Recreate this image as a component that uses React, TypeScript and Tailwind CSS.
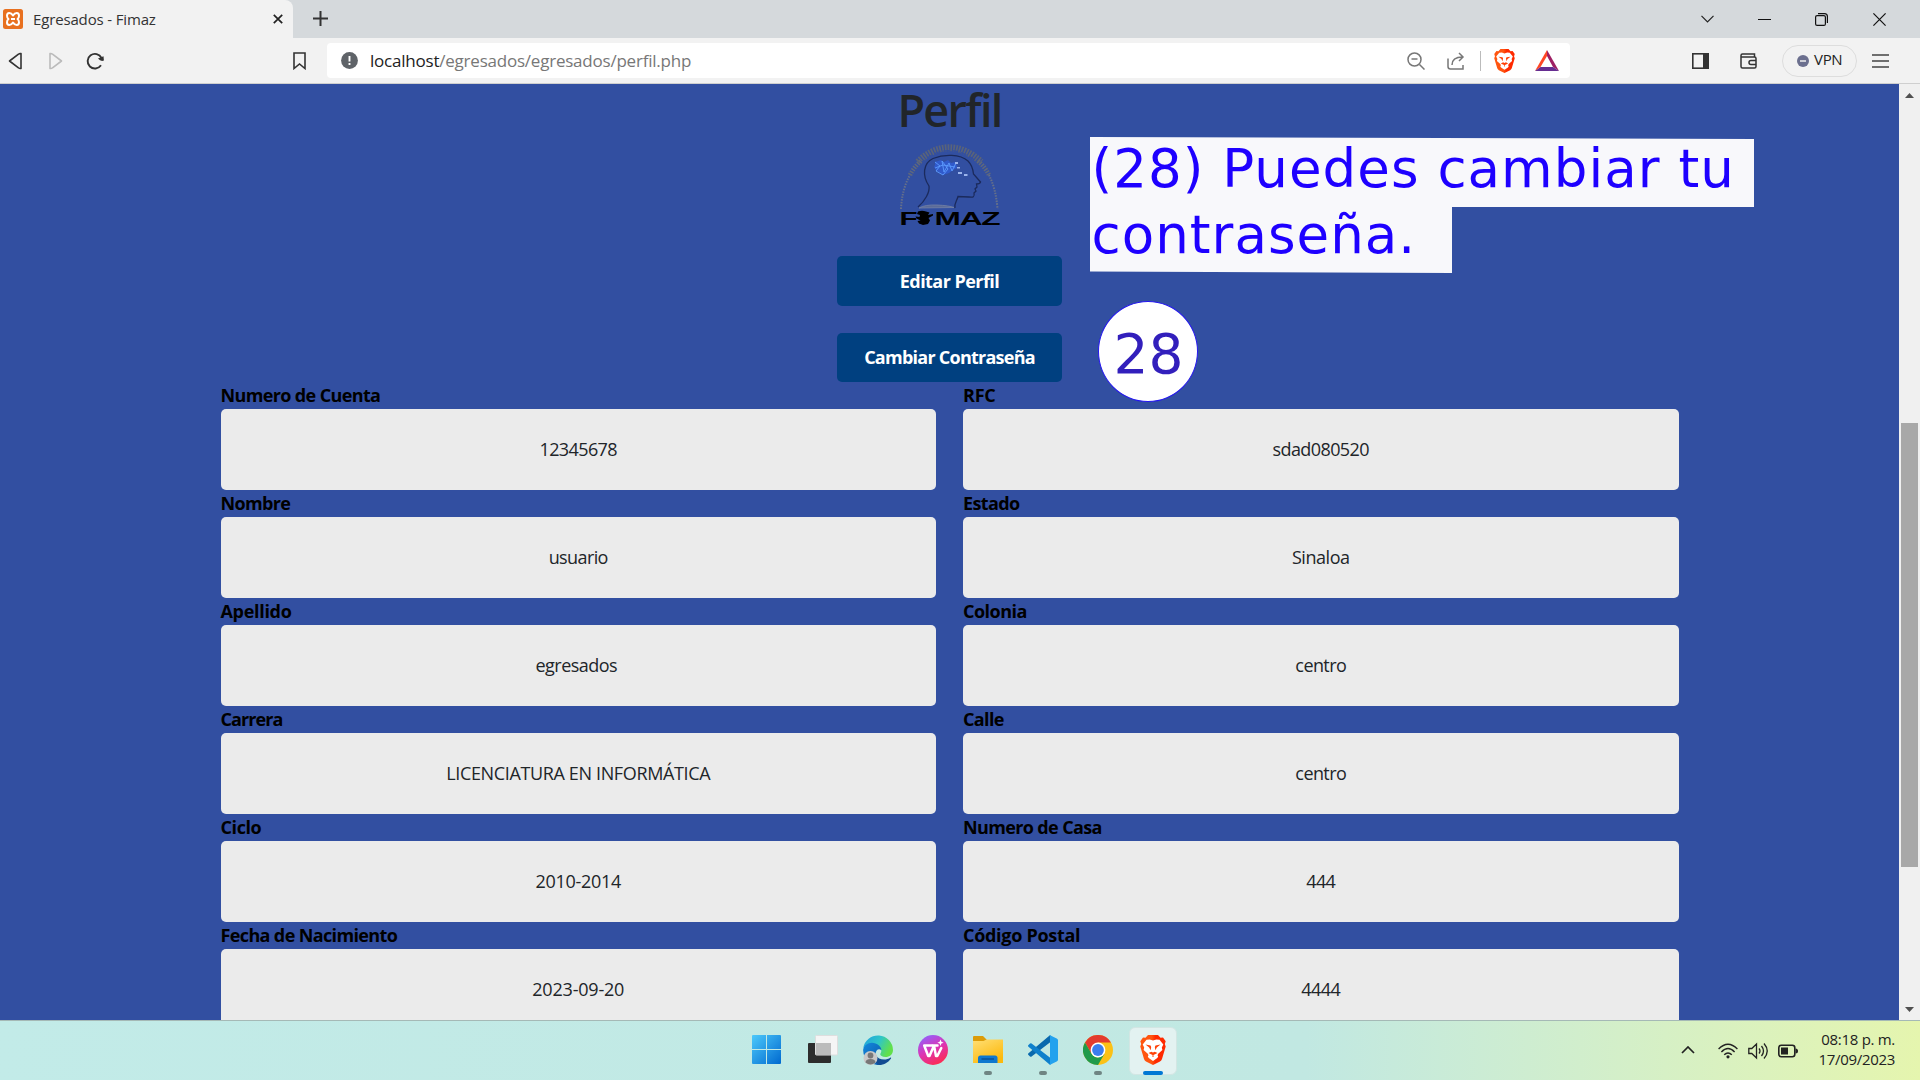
import React from "react";

type Field = { label: string; value: string; labelTrack?: string; valueTrack?: string };

const fields: Field[] = [
  { label: "Numero de Cuenta", value: "12345678" },
  { label: "RFC", value: "sdad080520", labelTrack: "tracking-[-0.2px]" },
  { label: "Nombre", value: "usuario" },
  { label: "Estado", value: "Sinaloa", valueTrack: "tracking-[-0.45px]" },
  { label: "Apellido", value: "egresados", labelTrack: "tracking-[-0.3px]", valueTrack: "tracking-[-0.55px] pr-[4px]" },
  { label: "Colonia", value: "centro", labelTrack: "tracking-[-0.5px]" },
  { label: "Carrera", value: "LICENCIATURA EN INFORMÁTICA", labelTrack: "tracking-[-0.9px]", valueTrack: "tracking-[-0.36px]" },
  { label: "Calle", value: "centro" },
  { label: "Ciclo", value: "2010-2014", labelTrack: "tracking-[-0.4px]", valueTrack: "tracking-[-0.3px]" },
  { label: "Numero de Casa", value: "444" },
  { label: "Fecha de Nacimiento", value: "2023-09-20", valueTrack: "tracking-[-0.2px]" },
  { label: "Código Postal", value: "4444", labelTrack: "tracking-[-0.3px]" },
];

function Brave({ w, h, id }: { w: number; h: number; id: string }) {
  return (
    <svg width={w} height={h} viewBox="0 0 26 30" preserveAspectRatio="none">
      <defs>
        <linearGradient id={id} x1="0" x2="1">
          <stop offset="0.45" stopColor="#ff5510" />
          <stop offset="0.6" stopColor="#ff2a00" />
        </linearGradient>
      </defs>
      <path d="M8 0h10l2.500 2.800 2.500-.3 2.700 3.800-.9 2.700.9 2.500-3.700 12.500q-.6 1.500-2 2.500L13 30l-7-3.500q-1.400-1-2-2.500L.3 11.500l.9-2.500L.3 6.300 3 2.500l2.500.3z" fill={`url(#${id})`} />
      <path d="M13 5.500l3.300-1 3.200.3 3.800 4.600-1.500 3.200.6 2.400-4.200 3.700-.7 1.600.7 1.300-.9 1.400L13 26l-4.300-3-.9-1.400.7-1.300-.7-1.600L3.600 15l.6-2.400L2.700 9.400l3.800-4.600 3.200-.3z" fill="#fff" />
      <path d="M5.500 9.600l5 .8.700 1.500-.6 3.400-1.400-2.800zM20.500 9.600l-5 .8-.7 1.500.6 3.400 1.400-2.800zM8.500 18l2.800-1.300L13 17.500l1.700-.8 2.800 1.300L13 20.300zM12.500 20h1v2h-1z" fill="#ff4208" />
    </svg>
  );
}

function Fimaz() {
  return (
    <svg className="mt-0.5" width="102" height="86" viewBox="0 0 102 86">
      <path d="M19 20C38 1 62 1 82 20" fill="none" stroke="#5d6576" strokeWidth="7" strokeDasharray="1.700 1.100" opacity=".9" />
      <path d="M21 22C39 4 61 4 80 22" fill="none" stroke="#324fa1" strokeWidth="1.200" strokeDasharray="6 3" />
      <path d="M11 33Q15 25 22 19M79 19Q86 25 90 33" fill="none" stroke="#5f687c" strokeWidth="4.500" strokeDasharray="1.500 1.200" />
      <path d="M2 67Q3 47 11 33M90 33Q97 47 98.500 67" fill="none" stroke="#66708a" strokeWidth="2" strokeDasharray="1.500 1.200" />
      <path d="M19 65C26 59 31 50 30 44C23 34 24 21 34 16.500C45 12 61 12 69 19C73 23 74 27 74.500 32L81.500 40Q81 42 77.500 42L78 45L76 47L77 49L75 51C76 55 74 55.500 70 55L59 54.500C58 59 55 61 56 66" fill="none" stroke="#1b2a5c" strokeWidth="1.300" />
      <path d="M20 66Q26 62.500 38 63T55 65.500z" fill="#5b6b98" stroke="#7482a6" strokeWidth=".8" />
      <path d="M36 20l6-2 3 2 4-2 3 3 5-1 1 6-4 2-4 3-6 2-7-5-2-3 1-2z" fill="#2f5cd6" opacity=".8" />
      <path d="M36 20l5 4-4 5 7 4 5-6-6-8 2 11 5-9 3 8 4-8M36 26l8-3 12 2" fill="none" stroke="#5d9cff" strokeWidth=".9" />
      <g fill="#9bb4ec"><rect x="56" y="20" width="3" height="2" /><rect x="58" y="25" width="3" height="1.500" /><rect x="59" y="30" width="4" height="2" /><rect x="65" y="32" width="3.500" height="2" /></g>
      <text x="0.500" y="83" fontFamily="Liberation Sans" fontWeight="700" fontSize="18" textLength="17" lengthAdjust="spacingAndGlyphs">F</text>
      <path d="M19 69.500q4-1.500 8 0l3.500 1-1.500 2.500 5-1v1.500l-4.500 2.500 1.500 2.500-2 3.500-5 1-4-1.500-1.500-2.500 3-.5-4-2-1-2 4 .500.500-2-3-1z" />
      <text x="35.500" y="83" fontFamily="Liberation Sans" fontWeight="700" fontSize="18" textLength="65" lengthAdjust="spacingAndGlyphs">MAZ</text>
    </svg>
  );
}

function TopChrome() {
  return (
    <header className="h-[84px] w-full shrink-0 text-[#333]">
      <div className="flex h-[38px] bg-[#d5d9dc]">
        <div className="flex w-[293px] items-center rounded-tr-lg bg-[#f2f2f2] pl-[3px]">
          <svg width="20" height="20" viewBox="0 0 20 20">
            <rect width="20" height="20" rx="2.500" fill="#e8701f" />
            <path d="M10 6.500Q8.500 4 6.200 4Q4 4 4 6.800Q4 9 5.500 10Q4 11 4 13.200Q4 16 6.200 16Q8.500 16 10 13.500Q11.500 16 13.800 16Q16 16 16 13.200Q16 11 14.500 10Q16 9 16 6.800Q16 4 13.800 4Q11.500 4 10 6.500ZM8 10h4" fill="none" stroke="#fff" strokeWidth="2" strokeLinejoin="round" />
          </svg>
          <span className="ml-[10px] w-[230px] -mt-px text-[15px] leading-5 tracking-[-0.15px]">Egresados - Fimaz</span>
          <svg className="ml-[10px]" width="10" height="10" viewBox="0 0 10 10" stroke="#222" strokeWidth="1.700"><path d="M.8.8l8.400 8.400M9.200.8L.8 9.200" /></svg>
        </div>
        <svg className="ml-5 mt-[11px]" width="15" height="15" viewBox="0 0 15 15" stroke="#333" strokeWidth="2"><path d="M7.500 0v15M0 7.500h15" /></svg>
        <div className="ml-auto flex items-center pr-[34px]">
          <svg className="mr-11" width="13" height="8" viewBox="0 0 13 8" fill="none" stroke="#222" strokeWidth="1.200"><path d="M.5.800l6 6 6-6" /></svg>
          <svg className="mr-11" width="13" height="13" viewBox="0 0 13 13" stroke="#111"><path d="M0 6.500h13" /></svg>
          <svg className="mr-[45px]" width="13" height="13" viewBox="0 0 13 13" fill="none" stroke="#111" strokeWidth="1.200"><rect x=".6" y="2.600" width="9.800" height="9.800" rx="1.500" /><path d="M3 .6h6.500q2.900 0 2.900 3v6.400" /></svg>
          <svg width="13" height="13" viewBox="0 0 13 13" stroke="#111" strokeWidth="1.200"><path d="M.4.400l12.200 12.200M12.600.400L.4 12.600" /></svg>
        </div>
      </div>
      <div className="flex h-[46px] items-center border-b border-[#cfcfcf] bg-[#f2f2f2] pl-2">
        <svg width="15" height="18" viewBox="0 0 15 18" fill="none" stroke="#333" strokeWidth="1.600" strokeLinejoin="round"><path d="M13 1.500v15q-1.500.3-2.500-.7L1.500 9l9-6.800q1-1 2.500-.7z" /></svg>
        <svg className="ml-[25px]" width="15" height="18" viewBox="0 0 15 18" fill="none" stroke="#bbb" strokeWidth="1.600" strokeLinejoin="round"><path d="M2 1.500v15q1.500.3 2.500-.7L13.500 9l-9-6.800Q3.500 1.200 2 1.500z" /></svg>
        <svg className="ml-[23px]" width="19" height="18" viewBox="0 0 19 18" fill="none" stroke="#333" strokeWidth="1.900"><path d="M15 13.300A7.300 7.300 0 1 1 15.500 6" /><path d="M12 6.500l5.500-2.300 .4 4.300q-3 1.500-5.900-2z" fill="#333" stroke="none" /></svg>
        <svg className="ml-[188px]" width="13" height="18" viewBox="0 0 13 18" fill="none" stroke="#333" strokeWidth="1.600"><path d="M1 1h11v15.500l-5.500-4.500L1 16.500z" /></svg>
        <div className="ml-[21px] flex h-[35px] w-[1243px] items-center rounded bg-white pl-[14px]">
          <svg width="17" height="17" viewBox="0 0 17 17"><circle cx="8.500" cy="8.500" r="8.400" fill="#5f6368" /><path d="M8.500 4v5.500M8.500 11v2" stroke="#fff" strokeWidth="1.900" /></svg>
          <span className="ml-3 text-[17px] tracking-[-0.22px] text-[#777]"><span className="text-[#222]">localhost</span>/egresados/egresados/perfil.php</span>
          <div className="ml-auto flex items-center pr-[11px]">
            <svg width="18" height="18" viewBox="0 0 18 18" fill="none" stroke="#777" strokeWidth="1.500"><circle cx="7.500" cy="7.500" r="6.500" /><path d="M12.500 12.500l5 5M4.500 7h6" /></svg>
            <svg className="ml-[22px]" width="19" height="18" viewBox="0 0 19 18" fill="none" stroke="#777" strokeWidth="1.500"><path d="M1 6.500v8q0 2.500 2.500 2.500H16v-4M5 13q0-8 10.500-8M12 1l4 4-4 4" /></svg>
            <i className="ml-[14px] h-5 w-px bg-[#bbb]" />
            <span className="ml-[13px]"><Brave w={21} h={24} id="b1" /></span>
            <svg className="ml-5" width="24" height="21" viewBox="0 0 24 21"><path d="M12 0v6L5.500 17 0 21z" fill="#ff4724" /><path d="M12 0l12 21-6-4-6-11z" fill="#9e1f63" /><path d="M0 21l5.500-4H18l6 4z" fill="#662d91" /></svg>
          </div>
        </div>
        <svg className="ml-[122px]" width="17" height="16" viewBox="0 0 17 16"><rect x=".8" y=".8" width="15.400" height="14.400" fill="none" stroke="#333" strokeWidth="1.600" /><path d="M11 1h5v14h-5z" fill="#333" /></svg>
        <svg className="ml-[31px]" width="17" height="16" viewBox="0 0 17 16" fill="none" stroke="#333" strokeWidth="1.500"><path d="M14.500 4V1H2.500Q1 1 1 2.500v11Q1 15 2.500 15h12q1.500 0 1.500-1.500V5.500Q16 4 14.500 4H1.500M16 7.500h-5q-2 0-2 2t2 2h5" /></svg>
        <div className="ml-[25px] flex h-8 w-[75px] items-center rounded-full border border-[#ddd] pl-[14px] text-[15px] tracking-[-0.3px] text-[#222]">
          <svg width="12" height="12" viewBox="0 0 12 12"><circle cx="6" cy="6" r="6" fill="#6b6f8e" /><path d="M3 6h6" stroke="#eee" strokeWidth="1.500" /></svg>
          <span className="-mt-0.5 ml-[5px]">VPN</span>
        </div>
        <svg className="ml-[15px]" width="17" height="14" viewBox="0 0 17 14" stroke="#444" strokeWidth="1.400"><path d="M0 1h17M0 7h17M0 13h17" /></svg>
      </div>
    </header>
  );
}

function TaskCell({ children, open }: { children: React.ReactNode; open?: boolean }) {
  return (
    <div className="relative flex h-12 w-[55px] items-center justify-center pb-0.5">
      {children}
      {open && <i className="absolute bottom-0 left-[23.500px] h-1 w-2 rounded-full bg-[#6f8583]" />}
    </div>
  );
}

function Taskbar() {
  return (
    <footer className="flex h-[60px] w-full shrink-0 items-center justify-between border-t border-[#a5b9b6] bg-linear-to-r from-[#c2ebe8] via-[#c1e8e2] via-68% to-[#e5f5ae]">
      <div className="ml-[740px] flex items-center">
        <TaskCell>
          <svg className="mr-[2px]" width="29" height="29" viewBox="0 0 29 29">
            <defs><linearGradient id="win" x2="1" y2="1"><stop stopColor="#4cc9fb" /><stop offset="1" stopColor="#0069cf" /></linearGradient></defs>
            <path d="M0 1q0-1 1-1h13v14H0zM15 0h13q1 0 1 1v13H15zM0 15h14v14H1q-1 0-1-1zM15 15h14v13q0 1-1 1H15z" fill="url(#win)" />
          </svg>
        </TaskCell>
        <TaskCell>
          <svg width="30" height="29" viewBox="0 0 30 29"><rect y="8" width="23" height="20" rx="1" fill="#2d2d2d" /><rect x="7.500" y=".5" width="22" height="19.500" rx="1" fill="#f5f5f5" stroke="#dedede" /><path d="M8 8h15v12H8z" fill="#bcbcbc" /></svg>
        </TaskCell>
        <TaskCell>
          <svg width="30" height="30" viewBox="0 0 30 30">
            <defs>
              <linearGradient id="edgeTop" x1="0" x2="1" y2=".4"><stop stopColor="#1f9fe0" /><stop offset=".55" stopColor="#2fc5c8" /><stop offset="1" stopColor="#62e04b" /></linearGradient>
              <linearGradient id="edgeSide" x1="0" x2="1" y2="1"><stop stopColor="#1389dd" /><stop offset="1" stopColor="#0b53a5" /></linearGradient>
            </defs>
            <path d="M.2 13A15 15 0 0 1 30 15c0 4.500-3.500 7-7.500 7s-6-2-5-3.500C19 16 18.500 13.500 15 13 10 10 4 9 .2 13z" fill="url(#edgeTop)" />
            <path d="M.1 15C1 8 10 5 16 10.500c2 2 2.500 3.500 2.200 4.500-3-2.500-6.700 1-5.200 6 1.500 5 6.500 7 8.500 7.500A15 15 0 0 1 .1 15z" fill="url(#edgeSide)" />
            <path d="M13 20c2 5 10 6 14.500 2.500q1 0 .5 1C25 28 20 30 16 30q-6-3-3-10z" fill="#124b92" />
            <circle cx="7.500" cy="23" r="7" fill="#c9c9c9" /><circle cx="7.500" cy="20.500" r="2.900" fill="#787878" /><path d="M2.500 27.500q0-3.500 5-3.500t5 3.500q-5 4-10 0z" fill="#787878" />
          </svg>
        </TaskCell>
        <TaskCell>
          <svg width="30" height="30" viewBox="0 0 30 30">
            <defs><linearGradient id="wps" x1=".2" x2=".7" y2="1"><stop stopColor="#8f63ff" /><stop offset=".5" stopColor="#dc35b4" /><stop offset="1" stopColor="#ff2b4b" /></linearGradient></defs>
            <circle cx="15" cy="15" r="15" fill="url(#wps)" />
            <path d="M14 10.500H6.200l4 10.500h1.300l4.500-10.500 2 10.500h1.300l4-8M14.500 10.500h5" fill="none" stroke="#fff" strokeWidth="2.500" strokeLinejoin="round" strokeLinecap="round" />
            <path d="M22.500 4.500l.9 2.300 2.300.9-2.300.9-.9 2.300-.9-2.300-2.300-.9 2.300-.9z" fill="#fff" />
          </svg>
        </TaskCell>
        <TaskCell open>
          <svg width="30" height="27" viewBox="0 0 30 27">
            <defs><linearGradient id="fold" x2=".6" y2="1"><stop stopColor="#ffdf75" /><stop offset="1" stopColor="#fcb90d" /></linearGradient></defs>
            <path d="M0 1q0-1 1-1h9l3.500 3.500V8H0z" fill="#dc9c08" />
            <path d="M0 5h10.500l3-1.500H30V27H0z" fill="url(#fold)" />
            <path d="M5 27v-5q0-2.500 2.500-2.500h14.500q2.500 0 2.500 2.500v5z" fill="#0f78cf" /><path d="M8.500 23h12.500" stroke="#0b4f93" strokeWidth="1.400" />
          </svg>
        </TaskCell>
        <TaskCell open>
          <svg width="30" height="30" viewBox="0 0 30 30">
            <path d="M0 19.500l2 2q.8.500 1.600 0L22.500 7V.3q-.8 0-1.500.7L.2 18.500z" fill="#0a69ad" />
            <path d="M0 10.500l2-2q.8-.5 1.600 0L22.500 23v6.700q-.8 0-1.500-.7L.2 11.500z" fill="#0f80cc" />
            <path d="M21 .8q.7-.8 1.600-.3l6.100 3Q30 4 30 5.200v19.600q0 1.200-1.300 1.700l-6.100 3q-.9.500-1.600-.3 1 .3 1-1.200V2q0-1.500-1-1.200z" fill="#24a2ee" />
          </svg>
        </TaskCell>
        <TaskCell open>
          <svg width="30" height="30" viewBox="0 0 30 30">
            <circle cx="15" cy="15" r="15" fill="#fbc116" />
            <path d="M2 7.500A15 15 0 0 1 28 7.500H15L8.500 18.800z" fill="#e33b2e" />
            <path d="M2 7.500A15 15 0 0 0 15 30l6.500-11.200L15 22.500q-4 0-6.500-3.700z" fill="#209a4b" />
            <circle cx="15" cy="15" r="7.400" fill="#fff" /><circle cx="15" cy="15" r="5.900" fill="#3b7ded" />
          </svg>
        </TaskCell>
        <TaskCell>
          <div className="relative mt-0.5 flex h-12 w-12 shrink-0 items-center justify-center rounded-md border border-[#d2e6e3] bg-[#e3f2f1] pb-0.5">
            <Brave w={26} h={30} id="b2" />
            <i className="absolute bottom-[-1px] left-[13px] h-1 w-5 rounded-full bg-[#0078d4]" />
          </div>
        </TaskCell>
      </div>
      <div className="flex items-center pr-[25px] text-[#222]">
        <svg className="mt-[-1px]" width="14" height="8" viewBox="0 0 14 8" fill="none" stroke="#222" strokeWidth="1.700"><path d="M1 7l6-6 6 6" /></svg>
        <svg className="ml-[23px]" width="20" height="16" viewBox="0 0 20 16" fill="none" stroke="#222" strokeWidth="1.400"><path d="M.6 6Q10-3.500 19.400 6M3.400 9Q10 2 16.600 9M6.200 11.800Q10 8 13.800 11.800" /><circle cx="10" cy="13.800" r="1.600" fill="#222" stroke="none" /></svg>
        <svg className="ml-[10px]" width="20" height="18" viewBox="0 0 20 18" fill="none" stroke="#222" strokeWidth="1.300"><path d="M.8 6.500h3L8.500 2v14l-4.700-4.500h-3zM11 6.500q2 2.500 0 5M13.500 4q4 5 0 10M16 1.500q6.500 7.500 0 15" /></svg>
        <svg className="ml-[10px]" width="20" height="14" viewBox="0 0 20 14"><rect x=".8" y="1.300" width="16" height="11.400" rx="2.500" fill="none" stroke="#222" strokeWidth="1.600" /><rect x="3" y="3.500" width="7" height="7" fill="#222" /><path d="M17.500 4.500q2.500 0 2.500 2.500t-2.500 2.500z" fill="#222" /></svg>
        <div className="-mt-1 ml-[20px] text-right text-[15px] leading-5 tracking-[-0.3px]">
          <div>08:18 p. m.</div>
          <div>17/09/2023</div>
        </div>
      </div>
    </footer>
  );
}

export default function App() {
  return (
    <div className="flex h-[1080px] w-[1920px] flex-col overflow-hidden font-['Open_Sans','Noto_Sans',sans-serif]">
      <TopChrome />
      <div className="flex h-[936px] shrink-0">
        <main className="relative h-full w-[1899px] overflow-hidden bg-[#324fa1]">
          <div className="flex flex-col items-center tracking-[-0.65px]">
            <h1 className="h-[56px] text-[45px] leading-[51px] font-semibold tracking-[-1.7px] text-[#212529]">Perfil</h1>
            <Fimaz />
            <div className="mt-[28px] flex h-[50px] w-[225px] items-center justify-center rounded-[5px] bg-[#004080] text-[18px] font-bold tracking-[-0.55px] text-white">Editar Perfil</div>
            <div className="mt-[27px] flex h-[49px] w-[225px] items-center justify-center rounded-[5px] bg-[#004080] text-[18px] font-bold tracking-[-0.75px] text-white">Cambiar Contraseña</div>
          </div>
          <div className="ml-[220.5px] grid w-[1458px] grid-cols-2 gap-x-[27px]">
            {fields.map((f) => (
              <div key={f.label}>
                <div className={`h-[27px] text-[18px] leading-[27px] font-bold text-black ${f.labelTrack ?? "tracking-[-0.63px]"}`}>{f.label}</div>
                <div className={`flex h-[81px] items-center justify-center rounded-[5px] bg-[#ebebeb] text-[18px] text-[#212529] ${f.valueTrack ?? "tracking-[-0.6px]"}`}>{f.value}</div>
              </div>
            ))}
          </div>
          <div className="absolute left-[1090px] top-[53px] font-['DejaVu_Sans',sans-serif] text-[53px] leading-[66px] tracking-[1.03px] whitespace-nowrap text-[#1e00ff]">
            <div className="h-[70px] w-[664px] bg-[#f8f8fb] pl-[1.5px] leading-[64px] [clip-path:polygon(0_0,100%_2px,100%_100%,0_100%)]">(28) Puedes cambiar tu</div>
            <div className="-mt-px h-[67px] w-[362px] bg-[#f8f8fb] pl-[1.5px] leading-[57px] [clip-path:polygon(0_0,100%_0,100%_100%,0_65.500px)]">contraseña.</div>
          </div>
          <div className="absolute left-[1098px] top-[217px] flex h-[101px] w-[100px] items-center justify-center rounded-[50%] border-[1.5px] border-[#2416f0] bg-white pt-[6px] pl-px font-['DejaVu_Sans',sans-serif] text-[55px] leading-none text-[#321fbc]">28</div>
        </main>
        <div className="flex w-[21px] flex-col items-center bg-[#f0f0f0] pt-[9px] pb-2">
          <svg width="9" height="5" viewBox="0 0 9 5" fill="#505050"><path d="M0 5l4.500-5L9 5z" /></svg>
          <div className="mt-[325px] h-[444px] w-[17px] bg-[#a8a8a8]" />
          <svg className="mt-auto" width="9" height="5" viewBox="0 0 9 5" fill="#505050"><path d="M0 0l4.500 5L9 0z" /></svg>
        </div>
      </div>
      <Taskbar />
    </div>
  );
}
